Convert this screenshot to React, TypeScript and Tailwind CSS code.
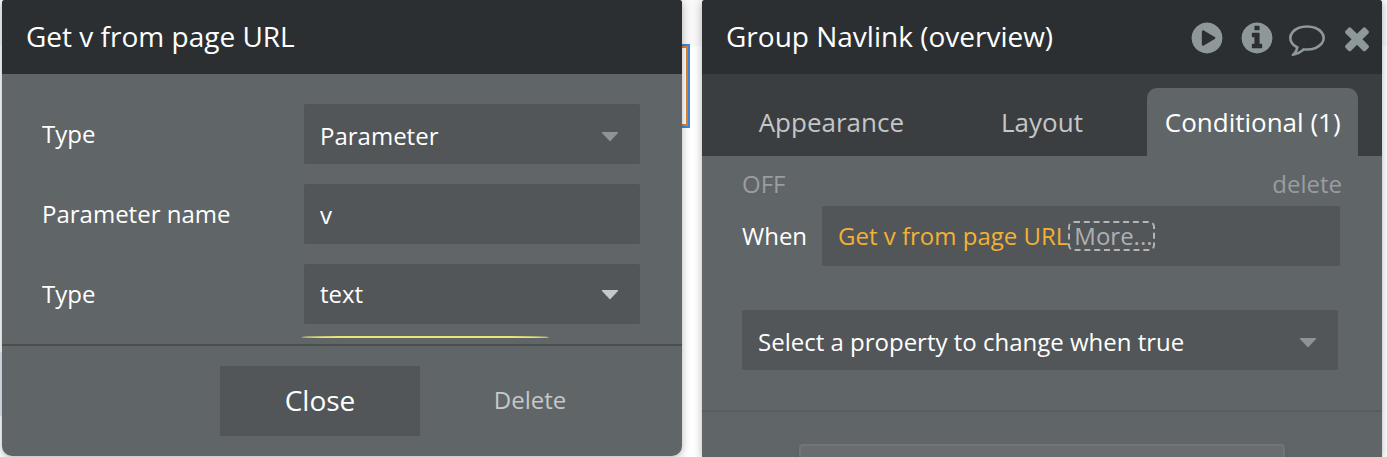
import { useId, useState } from "react";
import type { ReactNode } from "react";
import clsx from "clsx";

const icons = {
	play: "M896 128q209 0 385.5 103t279.5 279.5 103 385.5-103 385.5-279.5 279.5-385.5 103-385.5-103-279.5-279.5-103-385.5 103-385.5 279.5-279.5 385.5-103zm384 823q32-18 32-55t-32-55l-544-320q-31-19-64-1-32 19-32 56v640q0 37 32 56 16 8 32 8 17 0 32-9z",
	info: "M1152 1376v-160q0-14-9-23t-23-9h-96v-512q0-14-9-23t-23-9h-320q-14 0-23 9t-9 23v160q0 14 9 23t23 9h96v320h-96q-14 0-23 9t-9 23v160q0 14 9 23t23 9h448q14 0 23-9t9-23zm-128-896v-160q0-14-9-23t-23-9h-192q-14 0-23 9t-9 23v160q0 14 9 23t23 9h192q14 0 23-9t9-23zm640 416q0 209-103 385.5t-279.5 279.5-385.5 103-385.5-103-279.5-279.5-103-385.5 103-385.5 279.5-279.5 385.5-103 385.5 103 279.5 279.5 103 385.5z",
	comment:
		"M896 384q-204 0-381.5 69.5t-282 187.5-104.5 255q0 112 71.5 213.5t201.5 175.5l87 50-27 96q-24 91-70 172 152-63 275-171l43-38 57 6q69 8 130 8 204 0 381.5-69.5t282-187.5 104.5-255-104.5-255-282-187.5-381.5-69.5zm896 512q0 174-120 321.5t-326 233-450 85.5q-70 0-145-8-198 175-460 242-49 14-114 22h-5q-15 0-27-10.5t-16-27.5v-1q-3-4-.5-12t2-10 4.5-9.5l6-9 7-8.5 8-9q7-8 31-34.5t34.5-38 31-39.5 32.5-51 27-59 26-76q-157-89-247.5-220t-90.5-281q0-174 120-321.5t326-233 450-85.5 450 85.5 326 233 120 321.5z",
	close: "M1490 1322q0 40-28 68l-136 136q-28 28-68 28t-68-28l-294-294-294 294q-28 28-68 28t-68-28l-136-136q-28-28-28-68t28-68l294-294-294-294q-28-28-28-68t28-68l136-136q28-28 68-28t68 28l294 294 294-294q28-28 68-28t68 28l136 136q28 28 28 68t-28 68l-294 294 294 294q28 28 28 68z",
};

function IconButton({ icon, label }: { icon: keyof typeof icons; label: string }) {
	return (
		<button type="button" aria-label={label} className="text-[#8e9799]">
			<svg viewBox="0 0 1792 1792" className="size-9 fill-current">
				<path d={icons[icon]} />
			</svg>
		</button>
	);
}

function Panel({
	title,
	actions,
	className,
	children,
}: {
	title: string;
	actions?: ReactNode;
	className?: string;
	children: ReactNode;
}) {
	return (
		<section
			className={clsx(
				"relative min-w-0 flex-1 rounded-t-[3px] bg-[#606568] shadow-[0_2px_8px_rgba(0,0,0,0.3)]",
				className,
			)}
		>
			<header className="flex h-[74px] items-center justify-between rounded-t-[3px] bg-[#2b2f32] pl-6 pr-[7px]">
				<h2 className="pb-0.5 text-[28px] leading-9">{title}</h2>
				<div className="flex gap-3.5 pt-0.5">{actions}</div>
			</header>
			{children}
		</section>
	);
}

function Dropdown({
	id,
	label,
	value,
	active,
}: {
	id?: string;
	label?: string;
	value: string;
	active?: boolean;
}) {
	return (
		<div className="relative">
			<select
				id={id}
				aria-label={label}
				className={clsx(
					"block h-[60px] w-full appearance-none rounded-xs bg-[#525659] pl-4 pr-12 text-2xl outline-none",
					!active && "pt-1",
				)}
			>
				<option>{value}</option>
			</select>
			<svg
				viewBox="0 0 16 10"
				className={clsx(
					"pointer-events-none absolute right-[22px] h-2.5 w-4",
					active ? "top-[26px] fill-[#c3c9ce]" : "top-7 fill-[#8f9396]",
				)}
			>
				<path d="M0 0h16v1L8 9.500 0 1z" />
			</svg>
		</div>
	);
}

function Field({
	label,
	children,
}: {
	label: string;
	children: (id: string) => ReactNode;
}) {
	const id = useId();

	return (
		<div className="flex items-center">
			<label htmlFor={id} className="w-[262px] shrink-0 text-2xl">
				{label}
			</label>
			<div className="relative min-w-0 flex-1">{children(id)}</div>
		</div>
	);
}

function ParameterPanel() {
	const [name, setName] = useState("v");

	return (
		<Panel title="Get v from page URL" className="self-start rounded-b-[10px]">
			<div className="flex flex-col gap-5 border-b-2 border-[#4b4d4e] pb-5 pl-10 pr-[42px] pt-[30px]">
				<Field label="Type">
					{(id) => <Dropdown id={id} value="Parameter" />}
				</Field>
				<Field label="Parameter name">
					{(id) => (
						<input
							id={id}
							value={name}
							onChange={(e) => setName(e.target.value)}
							className="block h-[60px] w-full rounded-xs bg-[#525659] px-4 text-2xl outline-none"
						/>
					)}
				</Field>
				<Field label="Type">
					{(id) => (
						<>
							<Dropdown id={id} value="text" active />
							{/* marker stroke under the field */}
							<svg
								viewBox="0 0 250 4"
								className="absolute -left-1 top-[71px] h-1 w-[250px]"
							>
								<path
									d="M1 2Q2 1.200 40 1L210 1Q248 1.300 249 2.200Q248 3 210 3L40 3Q2 3 1 2Z"
									fill="#eae574"
								/>
							</svg>
						</>
					)}
				</Field>
			</div>
			<div className="flex justify-end py-5 pr-[42px]">
				<button
					type="button"
					className="h-[70px] w-[200px] bg-[#525659] pb-0.5 text-[28px]"
				>
					Close
				</button>
				<button
					type="button"
					className="w-[220px] pb-0.5 text-2xl text-[#c5c8c9]"
				>
					Delete
				</button>
			</div>
		</Panel>
	);
}

const tabs = ["Appearance", "Layout", "Conditional (1)"];

function ElementPanel() {
	const [selected, setSelected] = useState("Conditional (1)");

	return (
		<Panel
			title="Group Navlink (overview)"
			actions={
				<>
					<IconButton icon="play" label="Preview" />
					<IconButton icon="info" label="Info" />
					<IconButton icon="comment" label="Comment" />
					<IconButton icon="close" label="Close panel" />
				</>
			}
		>
			<div role="tablist" className="flex bg-[#3b3e41] px-6 pt-3.5">
				{tabs.map((tab) => (
					<button
						key={tab}
						type="button"
						role="tab"
						aria-selected={tab === selected}
						onClick={() => setSelected(tab)}
						className={clsx(
							"h-[68px] flex-1 basis-0 whitespace-nowrap rounded-t-[10px] text-[26px]",
							tab === selected ? "bg-[#606568]" : "text-[#c5c6c7]",
						)}
					>
						{tab}
					</button>
				))}
			</div>
			<div className="border-b-2 border-[#595d60] px-10 pb-10 pt-2">
				<div className="flex h-[42px] items-start justify-between text-2xl text-[#999d9f]">
					<button type="button" className="leading-10">
						OFF
					</button>
					<button type="button" className="leading-10">
						delete
					</button>
				</div>
				<div className="flex items-center pr-0.5 text-2xl">
					<span className="w-20 shrink-0">When</span>
					<div className="flex h-[60px] flex-1 items-center rounded-xs bg-[#525659] pl-4">
						<button type="button" className="whitespace-nowrap text-[#f2b134]">
							Get v from page URL
						</button>
						<button
							type="button"
							className="h-[30px] rounded-md border-2 border-dashed border-[#b3b5b6] pl-1 leading-[26px] text-[#adb0b1]"
						>
							More...
						</button>
					</div>
				</div>
				<div className="pr-1 pt-11">
					<Dropdown
						label="Property"
						value="Select a property to change when true"
					/>
				</div>
			</div>
			<div className="px-[97px] pt-8">
				<button
					type="button"
					aria-label="Add condition"
					className="block h-16 w-full rounded-sm border-2 border-[#717578] bg-[#696d70] shadow-md"
				/>
			</div>
		</Panel>
	);
}

function Backdrop() {
	return (
		<div className="absolute inset-0 flex flex-col bg-white">
			<div className="h-[46px] bg-[#f8f8f8]" />
			<div className="h-[306px]" />
			<div className="h-16 w-52 bg-[#e6ecf8]" />
			{/* outline of the element being edited */}
			<div className="absolute left-[calc(50%-94px)] top-11 h-[84px] w-[90px] border-2 border-[#3f86e0]">
				<div className="h-full border-2 border-[#d9852f]" />
			</div>
		</div>
	);
}

function App() {
	return (
		<main className="relative h-screen overflow-hidden font-['Open_Sans',sans-serif] text-white">
			<Backdrop />
			<div className="flex h-full gap-5 pl-0.5 pr-[5px]">
				<ParameterPanel />
				<ElementPanel />
			</div>
		</main>
	);
}

export default App;
